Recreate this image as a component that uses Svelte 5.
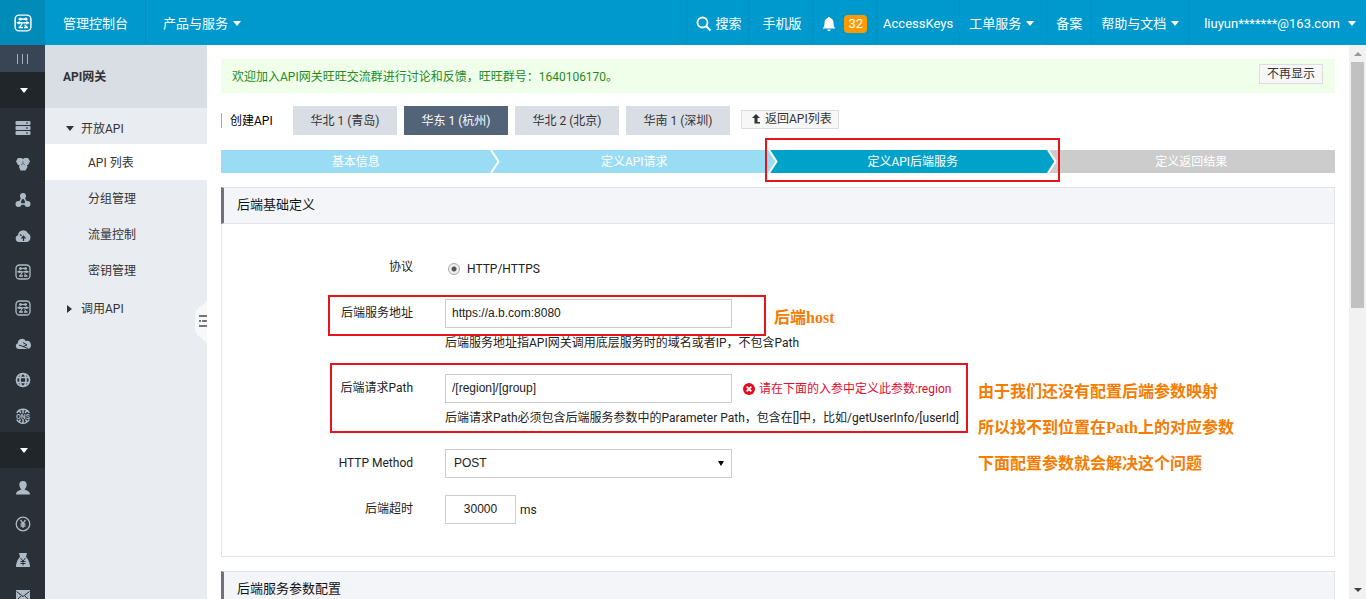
<script>
    const mainIcons = ['server', 'cluster', 'nodes', 'cloudUp', 'yun', 'yun', 'cloudNet', 'globe', 'ons'];
    const userIcons = ['user', 'yen', 'bag', 'mail'];

    const menu = [
        { name: 'API 列表', active: true },
        { name: '分组管理' },
        { name: '流量控制' },
        { name: '密钥管理' }
    ];

    const regions = ['华北 1 (青岛)', '华东 1 (杭州)', '华北 2 (北京)', '华南 1 (深圳)'];
    let region = '华东 1 (杭州)';

    const steps = [
        { name: '基本信息', state: 'done' },
        { name: '定义API请求', state: 'done' },
        { name: '定义API后端服务', state: 'current' },
        { name: '定义返回结果', state: 'todo' }
    ];

    let protocol = 'http';
    let host = 'https://a.b.com:8080';
    let path = '/[region]/[group]';
    let method = 'POST';
    let timeout = '30000';
</script>

{#snippet yun()}
    <rect x="1" y="1" width="14" height="14" rx="3.5" fill="none" stroke="currentColor" stroke-width="1.3" />
    <path d="M4 4.500h3.500M8.500 4.500h3.500M2.500 7.800h4.500M9 7.800h4.500M4 12h4M9 12h3.500" fill="none" stroke="currentColor" stroke-width="1.5" />
    <path d="M6.500 4.500h3M6.500 7.800h3M7.500 8l-2.500 4M9.500 9.500l2 2.500" fill="none" stroke="currentColor" stroke-width="1.1" />
    <path d="M5.500 3.300v2.500M10.500 3.300v2.500M4.500 6.600V9M11.500 6.600V9" fill="none" stroke="currentColor" stroke-width="1.6" />
{/snippet}

{#snippet icon(name)}
    <svg viewBox="0 0 16 16" width="16" height="16" aria-hidden="true">
        {#if name === 'server'}
            <path fill="currentColor" fill-rule="evenodd" d="M1.500 1h13a1 1 0 0 1 1 1v2a1 1 0 0 1-1 1h-13a1 1 0 0 1-1-1V2a1 1 0 0 1 1-1zM11 2.500v1h2v-1zM1.500 6h13a1 1 0 0 1 1 1v2a1 1 0 0 1-1 1h-13a1 1 0 0 1-1-1V7a1 1 0 0 1 1-1zM11 7.500v1h2v-1zM1.500 11h13a1 1 0 0 1 1 1v2a1 1 0 0 1-1 1h-13a1 1 0 0 1-1-1v-2a1 1 0 0 1 1-1zM11 12.500v1h2v-1z" />
        {:else if name === 'cluster'}
            <path fill="currentColor" d="M3 2h3.500L8 3 9.500 2H13l2 3.300L13 9h-1l.5 2-2 3.500h-5L4 11l.5-2H3L1 5.300z" />
            <path d="M8 5v2.500L6 9M8 7.500L10 9" stroke="#293038" stroke-width=".5" fill="none" />
        {:else if name === 'nodes'}
            <path d="M8 4.500L3.500 12h9z" fill="none" stroke="currentColor" stroke-width="1.500" />
            <g fill="currentColor"><circle cx="8" cy="4" r="3" /><circle cx="3.500" cy="12" r="3" /><circle cx="12.500" cy="12" r="3" /></g>
        {:else if name === 'cloudUp'}
            <path fill="currentColor" d="M4 14a3.500 3.500 0 0 1-1-6.800 5.300 5.300 0 0 1 10-2A4.800 4.800 0 0 1 12 14z" />
            <path d="M8.500 13V9M6.500 10.500l2-2.300 2 2.300M5 6.500l1.500 1.200" stroke="#293038" stroke-width="1.200" fill="none" />
        {:else if name === 'yun'}
            {@render yun()}
        {:else if name === 'cloudNet'}
            <path fill="currentColor" d="M3.500 13a3 3 0 0 1-.7-5.800A4.300 4.300 0 0 1 10.800 5a4 4 0 0 1 2 8z" />
            <path d="M8 6.500l4 2.500-4 1.500M8 10.500L4 9M8 10.500l5 2" stroke="#293038" stroke-width="1" fill="none" />
        {:else if name === 'globe'}
            <g fill="none" stroke="currentColor" stroke-width="1.700"><circle cx="8" cy="8" r="6.500" /><ellipse cx="8" cy="8" rx="3" ry="6.500" /><path d="M2 5.500h12M2 10.500h12" /></g>
        {:else if name === 'ons'}
            <g fill="none" stroke="currentColor" stroke-width="1.500"><path d="M1.800 5a7 7 0 0 1 12.400 0M1.800 11.500a7 7 0 0 0 12.400 0M8 1.500v4M8 11v4M4 2.500l2 2.500M12 2.500L10 5M4 14l1.500-2.500M12 14l-1.500-2.500" /></g>
            <text x="8" y="10.500" text-anchor="middle" font-size="7" font-weight="bold" fill="currentColor">ONS</text>
        {:else if name === 'user'}
            <path fill="currentColor" d="M8 1a3.700 3.700 0 0 1 3.700 3.800C11.700 7 10.300 9 9.500 9.400c1.500.8 5.500 1.300 5.500 5.100H1c0-3.800 4-4.300 5.500-5.100C5.700 9 4.300 7 4.300 4.800A3.700 3.700 0 0 1 8 1z" />
        {:else if name === 'yen'}
            <g fill="none" stroke="currentColor" stroke-width="1.300"><circle cx="8" cy="8" r="6.800" /><path d="M5.500 4L8 7.500 10.500 4M8 7.500V12M5.500 8h5M5.500 10h5" /></g>
        {:else if name === 'bag'}
            <path fill="currentColor" d="M4 1h8l-1 4c2 1.500 4 6 4 10H1c0-4 2-8.500 4-10z" />
            <path d="M5.500 6L8 9l2.500-3M8 9v4.500M5.500 9.500h5M5.500 11.500h5" stroke="#293038" fill="none" />
        {:else}
            <path fill="currentColor" d="M1 2h14v12H1z" />
            <path d="M1.500 3.500L8 8.500l6.500-5M1.500 12.500L6 8M14.500 12.500L10 8" stroke="#293038" fill="none" />
        {/if}
    </svg>
{/snippet}

<div class="page">
    <header>
        <a class="logo" href="#home" aria-label="首页">
            <svg viewBox="0 0 16 16" width="18" height="18" aria-hidden="true">{@render yun()}</svg>
        </a>
        <a class="console" href="#console">管理控制台</a>
        <button class="products">产品与服务 <i class="caret"></i></button>
        <nav>
            <button class="search">
                <svg viewBox="0 0 16 16" width="16" height="16" aria-hidden="true"><path d="M10 10l4.500 4.500" stroke="#fff" stroke-width="2.200" /><circle cx="6.500" cy="6.500" r="5" fill="none" stroke="#fff" stroke-width="1.800" /></svg>
                搜索
            </button>
            <a class="mobile" href="#mobile">手机版</a>
            <a class="messages" href="#messages" aria-label="消息 32">
                <svg viewBox="0 0 14 16" width="14" height="16" aria-hidden="true"><path fill="#fff" d="M7 1c.8 0 1.200.5 1.200 1.100C10.500 2.700 11.500 4.500 11.500 7c0 3 .8 4.500 2 5.500H.5c1.200-1 2-2.500 2-5.500 0-2.500 1-4.300 3.300-4.900C5.800 1.500 6.200 1 7 1zM5.300 13.500h3.400a1.700 1.700 0 0 1-3.400 0z" /></svg>
                <span class="badge">32</span>
            </a>
            <a class="keys" href="#keys">AccessKeys</a>
            <button class="tickets">工单服务 <i class="caret"></i></button>
            <a href="#beian">备案</a>
            <button>帮助与文档 <i class="caret"></i></button>
            <button class="account">liuyun*******@163.com <i class="caret"></i></button>
        </nav>
    </header>

    <div class="body">
        <aside class="rail">
            <button class="fold" aria-label="展开导航"><i></i><i></i><i></i></button>
            <button class="group" aria-label="产品与服务"><i class="caret"></i></button>
            <div class="icons">
                {#each mainIcons as name}
                    <a href="#product" aria-label={name}>{@render icon(name)}</a>
                {/each}
            </div>
            <button class="group" aria-label="用户中心"><i class="caret"></i></button>
            <div class="icons">
                {#each userIcons as name}
                    <a href="#user" aria-label={name}>{@render icon(name)}</a>
                {/each}
            </div>
        </aside>

        <aside class="side">
            <h1>API网关</h1>
            <button class="parent"><i class="caret"></i>开放API</button>
            {#each menu as item}
                <a class="item" class:active={item.active} href="#menu">{item.name}</a>
            {/each}
            <button class="parent"><i class="caret right"></i>调用API</button>
            <button class="handle" aria-label="收起菜单">
                <svg viewBox="0 0 12 44" width="12" height="44" aria-hidden="true">
                    <path d="M12 0v44C10 38 0 37 0 29V15C0 7 10 6 12 0z" fill="#f8f8f9" />
                    <path d="M4 16h8M4 26h8M7 21h5M4 21h2" stroke="#444b55" stroke-width="1.500" />
                </svg>
            </button>
        </aside>

        <main>
            <div class="notice">
                <span>欢迎加入API网关旺旺交流群进行讨论和反馈，旺旺群号：1640106170。</span>
                <button class="small">不再显示</button>
            </div>

            <div class="toolbar">
                <h2>创建API</h2>
                {#each regions as name}
                    <button class="tab" class:selected={name === region} on:click={() => (region = name)}>{name}</button>
                {/each}
                <button class="small back">
                    <svg viewBox="0 0 8 10" width="8" height="10" aria-hidden="true"><path d="M4 0l4 4H5.500v4H8v1.500H2.500V4H0z" fill="#333" /></svg>
                    返回API列表
                </button>
            </div>

            <ol class="steps">
                {#each steps as step, i}
                    <li class={step.state}>
                        {step.name}
                        {#if i < steps.length - 1}
                            <svg class={steps[i + 1].state} viewBox="0 0 10 23" width="10" height="23" aria-hidden="true">
                                <path class="next" d="M1 0h9v23H1l8-11.500z" />
                                <path d="M1 0l7.500 11.500L1 23" fill="none" stroke="#fff" stroke-width="2" />
                            </svg>
                        {/if}
                        {#if step.state === 'current'}
                            <span class="mark mark-step"></span>
                        {/if}
                    </li>
                {/each}
            </ol>

            <section>
                <h3>后端基础定义</h3>
                <form>
                    <div class="row">
                        <span class="label" id="protocol">协议</span>
                        <div class="line" role="radiogroup" aria-labelledby="protocol">
                            <label class="radio"><input type="radio" value="http" bind:group={protocol} />HTTP/HTTPS</label>
                        </div>
                    </div>
                    <div class="row">
                        <label class="label" for="host">后端服务地址</label>
                        <div>
                            <div class="line"><input class="text" id="host" type="text" bind:value={host} /></div>
                            <p>后端服务地址指API网关调用底层服务时的域名或者IP，不包含Path</p>
                        </div>
                        <span class="mark mark-host"></span>
                        <div class="remark remark-host">后端host</div>
                    </div>
                    <div class="row">
                        <label class="label" for="path">后端请求Path</label>
                        <div>
                            <div class="line">
                                <input class="text" id="path" type="text" bind:value={path} />
                                <span class="error">
                                    <svg viewBox="0 0 12 12" width="12" height="12" aria-hidden="true"><circle cx="6" cy="6" r="6" fill="#e30b20" /><path d="M3.700 3.700l4.600 4.600M8.300 3.700L3.700 8.300" stroke="#fff" stroke-width="1.800" /></svg>
                                    请在下面的入参中定义此参数:region
                                </span>
                            </div>
                            <p>后端请求Path必须包含后端服务参数中的Parameter Path，包含在[]中，比如/getUserInfo/[userId]</p>
                        </div>
                        <span class="mark mark-path"></span>
                        <div class="remark remark-path">
                            由于我们还没有配置后端参数映射<br />
                            所以找不到位置在Path上的对应参数<br />
                            下面配置参数就会解决这个问题
                        </div>
                    </div>
                    <div class="row">
                        <label class="label" for="method">HTTP Method</label>
                        <div class="line select">
                            <select id="method" bind:value={method}>
                                <option>POST</option>
                                <option>GET</option>
                                <option>PUT</option>
                                <option>DELETE</option>
                            </select>
                            <i></i>
                        </div>
                    </div>
                    <div class="row">
                        <label class="label" for="timeout">后端超时</label>
                        <div class="line"><input class="text short" id="timeout" type="text" bind:value={timeout} /><span class="unit">ms</span></div>
                    </div>
                </form>
            </section>

            <section>
                <h3>后端服务参数配置</h3>
            </section>
        </main>

        <div class="scrollbar" aria-hidden="true">
            <i class="up"></i>
            <div class="thumb"></div>
            <i class="down"></i>
        </div>
    </div>
</div>

<style>
    .page {
        display: flex;
        flex-direction: column;
        height: 100vh;
        overflow: hidden;
        background: #fff;
        color: #222;
        font: 12px/20px Roboto, "Noto Sans CJK SC", sans-serif;
    }

    * {
        box-sizing: border-box;
    }

    button {
        margin: 0;
        padding: 0;
        border: 0;
        background: none;
        color: inherit;
        font: inherit;
        white-space: nowrap;
    }

    a {
        color: inherit;
        text-decoration: none;
        white-space: nowrap;
    }

    h1, h2, h3, p, ol {
        margin: 0;
        padding: 0;
        font-size: 12px;
        font-weight: normal;
    }

    svg {
        display: block;
        flex: none;
    }

    .caret {
        width: 0;
        border: 4px solid transparent;
        border-top: 5px solid currentColor;
        border-bottom: 0;
    }

    /* Top bar */
    header {
        display: flex;
        flex: none;
        height: 45px;
        background: #0099cd;
        color: #fff;
        font-size: 13px;
    }

    header a, header button {
        display: flex;
        align-items: center;
        gap: 5px;
        padding-top: 2px;
    }

    header .logo {
        width: 45px;
        padding: 0;
        justify-content: center;
        background: #008bb9;
    }

    header .console {
        padding-right: 17px;
        padding-left: 18px;
        border-right: 1px solid #008fc0;
    }

    header .products {
        padding-left: 17px;
    }

    nav {
        display: flex;
        margin-left: auto;
    }

    nav a, nav button {
        padding-right: 9px;
        padding-left: 9px;
        border-left: 1px solid #0092c4;
    }

    nav .search {
        gap: 3px;
        padding-right: 7px;
    }

    nav .mobile {
        padding-right: 11px;
        padding-left: 13px;
    }

    nav .messages {
        gap: 8px;
    }

    nav .keys {
        padding-right: 6px;
        padding-left: 6px;
    }

    nav .tickets {
        padding-right: 12px;
    }

    nav .account {
        gap: 8px;
        padding-right: 10px;
        padding-left: 15px;
    }

    .badge {
        padding: 0 4px;
        border-radius: 4px;
        background: #f90;
        line-height: 18px;
    }

    .body {
        display: flex;
        flex: 1;
        min-height: 0;
    }

    /* Product rail */
    .rail {
        display: flex;
        flex: none;
        flex-direction: column;
        width: 45px;
        overflow: hidden;
        background: #293038;
        color: #aebac5;
    }

    .rail button {
        display: flex;
        flex: none;
        align-items: center;
        justify-content: center;
    }

    .rail .fold {
        gap: 4px;
        height: 27px;
        background: #394555;
    }

    .fold i {
        width: 1px;
        height: 10px;
        background: #a5b0bb;
    }

    .rail .group {
        height: 36px;
        padding-left: 3px;
        background: #21262b;
        color: #fff;
    }

    .icons {
        margin-bottom: -2px;
        padding-top: 2px;
    }

    .icons a {
        display: flex;
        align-items: center;
        justify-content: center;
        height: 36px;
        padding-left: 1px;
    }

    /* Side menu */
    .side {
        position: relative;
        display: flex;
        flex: none;
        flex-direction: column;
        width: 162px;
        background: #e9ecf1;
        color: #333;
    }

    .side h1 {
        padding: 22px 18px 21px;
        background: #d9dde4;
        font-weight: bold;
    }

    .parent {
        display: flex;
        align-items: center;
        gap: 7px;
        height: 36px;
        padding: 5px 0 0 21px;
    }

    .parent .right {
        margin: 0 2px 0 1px;
        border: 4px solid transparent;
        border-left: 5px solid currentColor;
        border-right: 0;
    }

    .item {
        padding: 2px 0 0 43px;
        line-height: 34px;
    }

    .active {
        background: #fff;
    }

    .handle {
        position: absolute;
        top: 255px;
        right: 0;
    }

    /* Content */
    main {
        flex: 1;
        min-width: 0;
        padding: 14px;
        overflow: hidden;
    }

    .notice {
        display: flex;
        justify-content: space-between;
        align-items: flex-start;
        padding: 5px 12px 5px 11px;
        background: #f0ffe9;
        color: #1f8a1f;
    }

    .notice span {
        padding: 3px 0 1px;
    }

    .small {
        padding: 1px 7px 0;
        border: 1px solid #ddd;
        background: #f7f7f7;
        color: #333;
        line-height: 17px;
    }

    .toolbar {
        display: flex;
        align-items: center;
        gap: 7px;
        margin: 13px 0 15px;
    }

    .toolbar h2 {
        width: 65px;
        padding: 1px 0 0 8px;
        border-left: 1px solid #8fb0c4;
        color: #000;
        line-height: 14px;
    }

    .tab {
        width: 104px;
        padding-top: 2px;
        background: #d9dde4;
        color: #333;
        line-height: 27px;
    }

    .selected {
        background: #546478;
        color: #fff;
    }

    .back {
        display: flex;
        align-items: center;
        gap: 5px;
        margin: 0 4px 3px;
        padding: 0 6px 0 10px;
    }

    .steps {
        display: flex;
        list-style: none;
    }

    .steps li {
        position: relative;
        flex: 1;
        padding: 2px 9px 0 0;
        color: #fff;
        line-height: 21px;
        text-align: center;
    }

    .steps svg {
        position: absolute;
        top: 0;
        right: 0;
    }

    li.done {
        background: #9bdcf5;
    }

    li.current {
        z-index: 1;
        background: #00a2ca;
    }

    li.todo {
        background: #ccc;
    }

    svg.done .next {
        fill: #9bdcf5;
    }

    svg.current .next {
        fill: #00a2ca;
    }

    svg.todo .next {
        fill: #ccc;
    }

    section {
        margin-top: 14px;
        border: 1px solid #e1e4e9;
    }

    h3 {
        margin: -1px 0 0 -1px;
        padding: 7px 13px 8px;
        border: 1px solid #e1e4e9;
        border-width: 1px 0;
        border-left: 3px solid #70717f;
        background: #f4f5f9;
        color: #111;
        font-size: 13px;
    }

    form {
        padding: 29px 0 15px;
    }

    .row {
        position: relative;
        display: flex;
        gap: 32px;
        margin-bottom: 17px;
    }

    .label {
        width: 191px;
        line-height: 28px;
        text-align: right;
    }

    .line {
        display: flex;
        align-items: center;
        height: 29px;
    }

    .radio {
        display: flex;
        align-items: center;
        gap: 7px;
        padding: 3px 0 0 3px;
    }

    .radio input {
        appearance: none;
        width: 12px;
        height: 12px;
        margin: 0;
        border: 1px solid #aaa;
        border-radius: 50%;
        background: radial-gradient(#555 0 2px, #eee 3px);
    }

    .text, select {
        width: 287px;
        height: 29px;
        margin: 0;
        padding: 0 6px 2px;
        border: 1px solid #ccc;
        border-radius: 0;
        background: #fff;
        color: #222;
        font: 12px "Liberation Sans", sans-serif;
    }

    select {
        appearance: none;
        padding-left: 8px;
    }

    .select {
        position: relative;
    }

    .select i {
        position: absolute;
        right: 8px;
        border: 3px solid transparent;
        border-top: 5px solid #000;
        border-bottom: 0;
    }

    .short {
        width: 71px;
        text-align: center;
    }

    .unit {
        padding: 0 4px;
    }

    .row p {
        margin: 5px 0 4px;
        white-space: nowrap;
    }

    .error {
        display: flex;
        align-items: center;
        gap: 4px;
        padding-left: 11px;
        color: #e30b30;
        white-space: nowrap;
    }

    /* Tutorial marks laid over the form */
    .mark {
        position: absolute;
        border: 2px solid #e8141c;
    }

    .mark-step {
        inset: -12px -3px -9px -13px;
    }

    .mark-host {
        top: -4px;
        left: 106px;
        width: 438px;
        height: 41px;
    }

    .mark-path {
        top: -11px;
        left: 108px;
        width: 638px;
        height: 70px;
    }

    .remark {
        position: absolute;
        color: #f57c00;
        font: bold 16px/36px "Liberation Serif", "Noto Sans CJK SC", serif;
        white-space: nowrap;
    }

    .remark-host {
        top: 1px;
        left: 552px;
    }

    .remark-path {
        top: 0;
        left: 756px;
    }

    /* Page scrollbar */
    .scrollbar {
        display: flex;
        flex: none;
        flex-direction: column;
        align-items: center;
        width: 17px;
        padding: 7px 0;
        background: #f1f1f1;
    }

    .scrollbar i {
        border: 4px solid transparent;
    }

    .scrollbar .up {
        border-top: 0;
        border-bottom-color: #999;
    }

    .scrollbar .down {
        margin-top: auto;
        border-top-color: #444;
        border-bottom: 0;
    }

    .thumb {
        width: 13px;
        height: 246px;
        margin-top: 6px;
        background: #c1c1c1;
    }
</style>
